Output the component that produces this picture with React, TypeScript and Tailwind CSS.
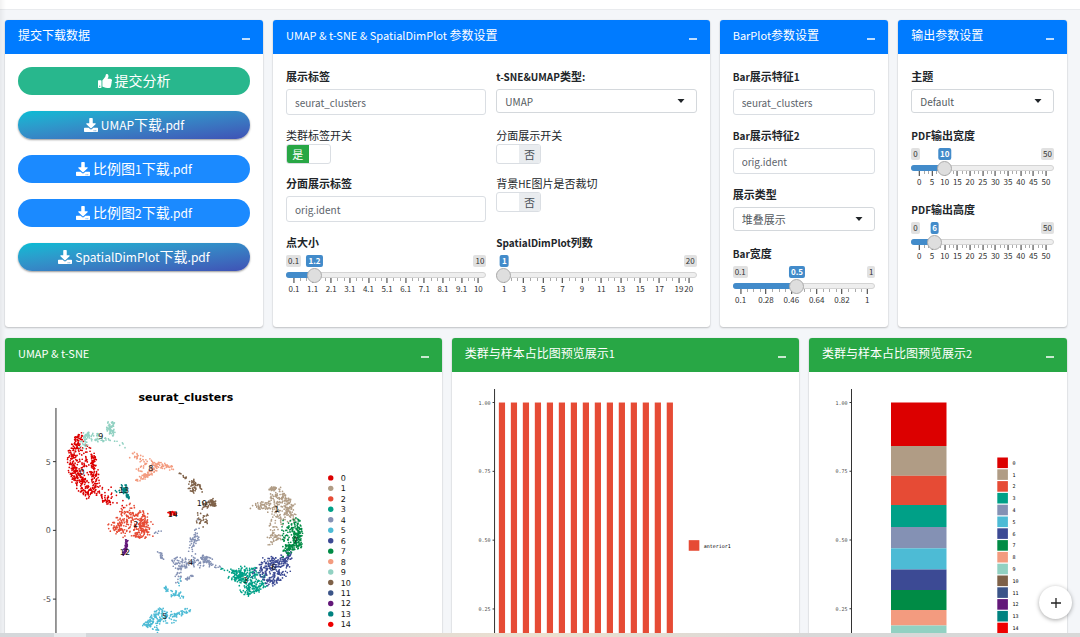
import { useState, useId } from 'react'
import type { ReactNode } from 'react'
import { FaDownload, FaThumbsUp } from 'react-icons/fa'

const CLUSTER_COLORS = [
  '#dc0000', '#b09c85', '#e64b35', '#00a087', '#8491b4', '#4dbbd5', '#3c4a94', '#008b45',
  '#f39b7f', '#91d1c2', '#7e6148', '#3b5488', '#631879', '#008280', '#ee0000',
]

// strip of points: cluster, x1, y1, x2, y2, width, count
type Strip = [number, number, number, number, number, number, number]

const STRIPS: Strip[] = [
  [0, 80, 437, 71, 456, 7, 70], [0, 72, 455, 75, 478, 8, 90], [0, 77, 474, 87, 494, 10, 90],
  [0, 83, 446, 86, 478, 11, 60], [0, 94, 455, 94, 468, 4, 45], [0, 93, 468, 97, 486, 7, 50],
  [0, 85, 490, 99, 492, 8, 40], [0, 99, 497, 112, 502, 7, 35], [0, 76, 442, 82, 435, 5, 18],
  [0, 106, 490, 128, 506, 8, 12],
  [9, 111, 422, 112, 434, 5, 55], [9, 84, 435, 98, 434, 4, 30], [9, 82, 445, 90, 438, 7, 30],
  [9, 96, 440, 110, 439, 3, 24], [9, 104, 429, 109, 431, 4, 8], [9, 112, 440, 124, 446, 4, 6],
  [8, 132, 455, 150, 462, 6, 30], [8, 150, 463, 172, 468, 5, 60], [8, 156, 468, 144, 478, 5, 65],
  [8, 137, 481, 143, 478, 4, 14], [8, 138, 472, 146, 466, 5, 12],
  [2, 112, 526, 122, 528, 8, 55], [2, 122, 526, 143, 524, 18, 120], [2, 140, 513, 145, 532, 7, 85],
  [2, 119, 514, 136, 517, 10, 30], [2, 135, 532, 149, 535, 8, 45], [2, 123, 510, 136, 507, 8, 12],
  [13, 124, 486, 125, 492, 4, 45], [13, 126, 493, 129, 499, 2, 14], [13, 115, 491, 121, 492, 3, 5],
  [12, 127, 540, 125, 552, 2, 40], [12, 123, 556, 127, 545, 2, 30],
  [14, 169, 514, 176, 513, 3, 24],
  [10, 191, 484, 194, 490, 7, 36], [10, 193, 482, 202, 491, 5, 16], [10, 178, 473, 187, 478, 2, 9],
  [10, 204, 504, 215, 504, 5, 36], [10, 212, 500, 214, 505, 4, 26], [10, 202, 509, 203, 524, 9, 32],
  [4, 199, 520, 194, 541, 4, 10], [4, 192, 542, 196, 538, 6, 24], [4, 193, 546, 192, 553, 7, 14],
  [4, 159, 552, 163, 558, 3, 16], [4, 173, 563, 192, 564, 9, 60], [4, 192, 563, 211, 562, 8, 45],
  [4, 203, 557, 210, 561, 4, 35], [4, 179, 567, 178, 583, 5, 24], [4, 186, 580, 192, 576, 2, 12],
  [4, 212, 565, 224, 569, 3, 7], [4, 150, 530, 160, 533, 5, 5],
  [5, 165, 588, 168, 591, 3, 16], [5, 173, 594, 182, 595, 6, 30], [5, 179, 580, 179, 585, 3, 4],
  [5, 146, 627, 152, 621, 5, 40], [5, 151, 624, 163, 612, 9, 70], [5, 158, 616, 172, 618, 10, 50],
  [5, 172, 617, 190, 610, 4, 45], [5, 156, 629, 158, 632, 3, 8],
  [3, 222, 569, 238, 571, 3, 14], [3, 232, 574, 244, 578, 9, 80], [3, 240, 570, 258, 572, 6, 40],
  [3, 244, 579, 262, 583, 13, 110], [3, 245, 592, 254, 591, 8, 45], [3, 254, 589, 265, 587, 6, 30],
  [6, 259, 575, 268, 562, 11, 50], [6, 266, 562, 286, 562, 10, 70], [6, 269, 571, 282, 571, 16, 100],
  [6, 270, 582, 276, 580, 7, 35], [6, 283, 561, 290, 556, 6, 25], [6, 288, 550, 292, 560, 4, 12],
  [1, 271, 489, 275, 489, 3, 30], [1, 278, 493, 287, 502, 9, 45], [1, 254, 507, 275, 504, 6, 55],
  [1, 275, 502, 290, 513, 18, 110], [1, 288, 504, 293, 519, 6, 40], [1, 278, 513, 276, 530, 10, 36],
  [1, 272, 537, 281, 537, 7, 32], [1, 270, 546, 273, 541, 3, 6],
  [7, 295, 519, 299, 538, 7, 60], [7, 298, 530, 298, 546, 7, 75], [7, 287, 524, 290, 545, 11, 60],
  [7, 286, 548, 301, 545, 5, 50], [7, 284, 553, 291, 550, 6, 25],
]

const CLUSTER_LABELS: [string, number, number][] = [
  ['0', 82, 475], ['1', 277, 512], ['2', 136, 527], ['3', 246, 583], ['4', 191, 565],
  ['5', 165, 619], ['6', 274, 570], ['7', 296, 543], ['8', 151, 471], ['9', 101, 439],
  ['10', 202, 506], ['12', 125, 555], ['13', 124, 493], ['14', 173, 517],
]

// small seeded generator, so the plot is the same on every render
function makeRandom(seed: number) {
  let s = seed
  return () => {
    s = (s * 1664525 + 1013904223) % 4294967296
    return s / 4294967296
  }
}

const random = makeRandom(7)

function stripPath([, x1, y1, x2, y2, width, count]: Strip) {
  let d = ''
  for (let i = 0; i < count; i++) {
    const t = random()
    const angle = random() * Math.PI * 2
    const r = Math.sqrt(random()) * width * 0.7
    const x = x1 + (x2 - x1) * t + Math.cos(angle) * r
    const y = y1 + (y2 - y1) * t + Math.sin(angle) * r
    d += `M${x.toFixed(1)} ${y.toFixed(1)}h0`
  }
  return d
}

const POINTS = STRIPS.map((s) => ({ color: CLUSTER_COLORS[s[0]], d: stripPath(s) }))

// Latin letters are set a little smaller than the Chinese around them
function Mixed({ text, latin }: { text: string; latin: string }) {
  return (
    <span>
      {text.split(/([\x20-\x7e]+)/).map((part, i) => (i % 2 ? <span key={i} className={`leading-none ${latin}`}>{part}</span> : part))}
    </span>
  )
}

interface CardProps {
  title: string
  className: string
  tone?: 'blue' | 'green'
  children: ReactNode
}

function Card({ title, className, tone = 'blue', children }: CardProps) {
  const [open, setOpen] = useState(true)
  return (
    <section className={`flex flex-col rounded-[3px] bg-white shadow-[0_0_1px_rgba(0,0,0,0.2),0_1px_2px_rgba(0,0,0,0.2)] ${className}`}>
      <header
        className={`flex h-[34px] items-center justify-between rounded-t-[3px] px-[13px] text-white ${
          tone === 'blue' ? 'bg-[#007bff]' : 'bg-[#28a745]'
        }`}
      >
        <h3 className="pb-1 text-[12px] leading-4 whitespace-nowrap">
          <Mixed text={title} latin="text-[11px]" />
        </h3>
        <button type="button" aria-label={title} onClick={() => setOpen(!open)} className="flex h-4 w-2 items-center pt-1">
          <span className="h-[2px] w-2 bg-white/75" />
        </button>
      </header>
      {open && children}
    </section>
  )
}

function Label({ htmlFor, text }: { htmlFor: string; text: string }) {
  return (
    <label htmlFor={htmlFor} className="mb-[5px] block text-[11px] leading-4 font-bold whitespace-nowrap text-[#212529]">
      <Mixed text={text} latin="text-[10px]" />
    </label>
  )
}

function TextField({ label, value }: { label: string; value: string }) {
  const id = useId()
  return (
    <div className="mb-3">
      <Label htmlFor={id} text={label} />
      <input
        id={id}
        type="text"
        defaultValue={value}
        className="block h-[26px] w-full rounded-[3px] border border-[#dadee3] bg-white px-2 text-[10px] text-[#5d646b] outline-none"
      />
    </div>
  )
}

function SelectField({ label, options, size = 'text-[10px]' }: { label: string; options: string[]; size?: string }) {
  const id = useId()
  return (
    <div className="mb-[14px]">
      <Label htmlFor={id} text={label} />
      <div className="relative">
        <select
          id={id}
          className={`block h-6 w-full appearance-none rounded-[3px] border border-[#d4d8dc] bg-white px-2 text-[#555b61] outline-none ${size}`}
        >
          {options.map((o) => (
            <option key={o}>{o}</option>
          ))}
        </select>
        <svg viewBox="0 0 8 4" className="pointer-events-none absolute top-[10px] right-3 h-1 w-2">
          <path d="M0.5 0h7L4 4z" fill="#212529" />
        </svg>
      </div>
    </div>
  )
}

function Toggle({ label, on }: { label: string; on?: boolean }) {
  const [checked, setChecked] = useState(!!on)
  return (
    <label className="mb-[11px] block w-max cursor-pointer text-[11px] leading-[17px] text-[#212529]">
      <Mixed text={label} latin="text-[10px]" />
      <input type="checkbox" className="sr-only" checked={checked} onChange={() => setChecked(!checked)} />
      <span className="flex h-5 w-[45px] overflow-hidden rounded-[3px] border border-[#dadee3] bg-white leading-[18px]">
        {checked ? (
          <span className="w-1/2 bg-[#28a745] text-center text-white">是</span>
        ) : (
          <span className="ml-auto w-1/2 bg-[#e9ecef] text-center text-[#495057]">否</span>
        )}
      </span>
    </label>
  )
}

interface SliderProps {
  label: string
  min: number
  max: number
  step: number
  value: number
  marks: number[]
  minor: number
}

function Slider({ label, min, max, step, value, marks, minor }: SliderProps) {
  const id = useId()
  const [current, setCurrent] = useState(value)
  const pct = (v: number) => ((v - min) / (max - min)) * 100
  const gap = marks[1] - marks[0]
  const ticks = marks
    .flatMap((m) => Array.from({ length: minor }, (_, i) => m + (gap * (i + 1)) / (minor + 1)))
    .filter((v) => v < max)

  return (
    <div>
      <Label htmlFor={id} text={label} />
      <div className="h-[41px] text-[8px] leading-3 text-[#333]">
        <div className="relative flex h-4 items-start justify-between">
          <span className={`rounded-[2px] bg-[#e1e1e1] px-[2px] ${pct(current) < 6 ? 'invisible' : ''}`}>{min}</span>
          <span className={`rounded-[2px] bg-[#e1e1e1] px-[2px] ${pct(current) > 94 ? 'invisible' : ''}`}>{max}</span>
          <div className="absolute inset-x-2 top-0">
            <span
              className="absolute -translate-x-1/2 rounded-[2px] bg-[#428bca] px-[2px] font-bold text-white"
              style={{ left: `${pct(current)}%` }}
            >
              {current}
            </span>
          </div>
        </div>
        <div className="relative h-[7px]">
          <div className="absolute inset-x-0 top-[1px] h-[6px] rounded-full border border-[#d4d4d4] bg-[#eee]" />
          <div
            className="absolute left-0 top-[1px] h-[6px] rounded-l-full bg-[#428bca]"
            style={{ width: `${pct(current)}%` }}
          />
          <input
            id={id}
            type="range"
            min={min}
            max={max}
            step={step}
            value={current}
            onChange={(e) => setCurrent(Number(e.target.value))}
            className="absolute inset-x-0 top-[-4px] z-10 m-0 h-4 w-full appearance-none bg-transparent outline-none [&::-webkit-slider-thumb]:size-[15px] [&::-webkit-slider-thumb]:appearance-none [&::-webkit-slider-thumb]:rounded-full [&::-webkit-slider-thumb]:border [&::-webkit-slider-thumb]:border-solid [&::-webkit-slider-thumb]:border-[#ababab] [&::-webkit-slider-thumb]:bg-[#dedede]"
          />
        </div>
        <div className="relative mx-2 h-4">
          {ticks.map((v) => (
            <span key={v} className="absolute top-0 h-[3px] w-px bg-[#aaa]" style={{ left: `${pct(v)}%` }} />
          ))}
          {marks.map((m) => (
            <span key={m} className="absolute top-0 flex -translate-x-1/2 flex-col items-center" style={{ left: `${pct(m)}%` }}>
              <span className="h-[5px] w-px bg-[#333]" />
              <span>{m}</span>
            </span>
          ))}
        </div>
      </div>
    </div>
  )
}

function UmapPlot() {
  return (
    <svg viewBox="5 372 437 360" className="w-full" fontFamily="DejaVu Sans, sans-serif">
      <text x="186" y="401" fontSize="11" fontWeight="bold" textAnchor="middle">seurat_clusters</text>
      <path d="M56 408V680H315" stroke="#333" fill="none" />
      {[5, 0, -5].map((v) => (
        <g key={v}>
          <path d={`M53 ${530.5 - v * 13.76}h3`} stroke="#333" />
          <text x="51" y={533.5 - v * 13.76} fontSize="8" textAnchor="end" fill="#4d4d4d">{v}</text>
        </g>
      ))}
      {POINTS.map((p, i) => (
        <path key={i} d={p.d} stroke={p.color} strokeWidth="1.7" strokeLinecap="round" fill="none" />
      ))}
      {CLUSTER_LABELS.map(([name, x, y]) => (
        <text key={name} x={x} y={y} fontSize="8" textAnchor="middle" fill="#111">{name}</text>
      ))}
      {CLUSTER_COLORS.map((c, i) => (
        <g key={i}>
          <circle cx="331" cy={478 + i * 10.47} r="2.7" fill={c} />
          <text x="341" y={481 + i * 10.47} fontSize="8" fill="#111">{i}</text>
        </g>
      ))}
    </svg>
  )
}

const Y_TICKS = ['1.00', '0.75', '0.50', '0.25']

function YAxis({ x }: { x: number }) {
  return (
    <g>
      <path d={`M${x} 17V312`} stroke="#333" />
      {Y_TICKS.map((t, i) => (
        <g key={t}>
          <path d={`M${x - 2} ${30.5 + i * 68.75}h2`} stroke="#333" />
          <text x={x - 4} y={32.5 + i * 68.75} fontSize="5" textAnchor="end" fill="#4d4d4d">{t}</text>
        </g>
      ))}
    </g>
  )
}

function SampleBars() {
  return (
    <svg viewBox="0 0 347 360" className="w-full" fontFamily="DejaVu Sans Mono, monospace">
      <YAxis x={42.5} />
      {CLUSTER_COLORS.map((_, i) => (
        <rect key={i} x={46.8 + i * 11.98} y="30.5" width="6.2" height="275" fill="#e64b35" />
      ))}
      <rect x="236.5" y="168" width="10.6" height="10.6" fill="#e64b35" />
      <text x="251.5" y="175.5" fontSize="5" fill="#000">anterior1</text>
    </svg>
  )
}

// top edge of each cluster's share in the stack
const STACK = [30.5, 74, 103.8, 133, 155, 176.3, 197.5, 218, 238, 253.5, 268, 279, 288, 295, 301, 305.5]

function ClusterStack() {
  return (
    <svg viewBox="0 0 258 360" className="w-full" fontFamily="DejaVu Sans Mono, monospace">
      <YAxis x={42.5} />
      {CLUSTER_COLORS.map((c, i) => (
        <g key={i}>
          <rect x="82" y={STACK[i]} width="55.5" height={STACK[i + 1] - STACK[i]} fill={c} />
          <rect x="188.3" y={85.5 + i * 11.8} width="10.6" height="10.6" fill={c} />
          <text x="203.5" y={92.8 + i * 11.8} fontSize="5" fill="#000">{i}</text>
        </g>
      ))}
    </svg>
  )
}

const DOWNLOADS = [
  { name: 'UMAP下载.pdf', shaded: true },
  { name: '比例图1下载.pdf', shaded: false },
  { name: '比例图2下载.pdf', shaded: false },
  { name: 'SpatialDimPlot下载.pdf', shaded: true },
]

const BUTTON = 'flex h-7 items-center justify-center gap-[3px] rounded-full pb-px text-[14px] text-white'
const SHADED = 'bg-linear-to-br from-[#00bcd4] to-[#3f51b5] shadow-[0_1px_2px_rgba(0,0,0,0.4)]'

export default function App() {
  return (
    <div className="relative flex h-screen flex-col overflow-hidden bg-[#f4f6f9] font-['Noto_Sans_CJK_SC',sans-serif]">
      <div className="h-[10px] shrink-0 border-b border-[#e9ebee] bg-white" />

      <main className="grid grid-cols-12 gap-x-[10px] gap-y-[11px] pt-[10px] pr-[13px] pl-[5px]">
        <Card title="提交下载数据" className="col-span-3">
          <div className="flex flex-col gap-4 px-[13px] pt-[13px] pb-5">
            <button type="button" className={`${BUTTON} bg-[#28b78d]`}>
              <FaThumbsUp className="size-[14px]" />
              提交分析
            </button>
            {DOWNLOADS.map((d) => (
              <button key={d.name} type="button" className={`${BUTTON} ${d.shaded ? SHADED : 'bg-[#1b8aff]'}`}>
                <FaDownload className="size-[14px]" />
                <Mixed text={d.name} latin="text-[12px]" />
              </button>
            ))}
          </div>
        </Card>

        <Card title="UMAP & t-SNE & SpatialDimPlot 参数设置" className="col-span-5">
          <div className="grid grid-cols-2 gap-x-[10px] px-[13px] pt-[14px] pb-5">
            <div>
              <TextField label="展示标签" value="seurat_clusters" />
              <Toggle label="类群标签开关" on />
              <TextField label="分面展示标签" value="orig.ident" />
              <Slider label="点大小" min={0.1} max={10} step={0.1} value={1.2} marks={[0.1, 1.1, 2.1, 3.1, 4.1, 5.1, 6.1, 7.1, 8.1, 9.1, 10]} minor={2} />
            </div>
            <div className="flex flex-col">
              <SelectField label="t-SNE&UMAP类型:" options={['UMAP', 't-SNE']} />
              <Toggle label="分面展示开关" />
              <Toggle label="背景HE图片是否裁切" />
              <div className="mt-auto">
                <Slider label="SpatialDimPlot列数" min={1} max={20} step={1} value={1} marks={[1, 3, 5, 7, 9, 11, 13, 15, 17, 19, 20]} minor={2} />
              </div>
            </div>
          </div>
        </Card>

        <Card title="BarPlot参数设置" className="col-span-2">
          <div className="px-[13px] pt-[14px] pb-5">
            <TextField label="Bar展示特征1" value="seurat_clusters" />
            <TextField label="Bar展示特征2" value="orig.ident" />
            <SelectField label="展示类型" options={['堆叠展示']} size="text-[11px]" />
            <Slider label="Bar宽度" min={0.1} max={1} step={0.1} value={0.5} marks={[0.1, 0.28, 0.46, 0.64, 0.82, 1]} minor={3} />
          </div>
        </Card>

        <Card title="输出参数设置" className="col-span-2">
          <div className="flex flex-col px-[13px] pt-[14px] pb-5">
            <SelectField label="主题" options={['Default']} />
            <div className="flex flex-col gap-3">
              <Slider label="PDF输出宽度" min={0} max={50} step={1} value={10} marks={[0, 5, 10, 15, 20, 25, 30, 35, 40, 45, 50]} minor={2} />
              <Slider label="PDF输出高度" min={0} max={50} step={1} value={6} marks={[0, 5, 10, 15, 20, 25, 30, 35, 40, 45, 50]} minor={2} />
            </div>
          </div>
        </Card>

        <Card title="UMAP & t-SNE" tone="green" className="col-span-5">
          <UmapPlot />
        </Card>
        <Card title="类群与样本占比图预览展示1" tone="green" className="col-span-4">
          <SampleBars />
        </Card>
        <Card title="类群与样本占比图预览展示2" tone="green" className="col-span-3">
          <ClusterStack />
        </Card>
      </main>

      <button
        type="button"
        aria-label="+"
        className="fixed right-2 bottom-[18px] flex size-[33px] items-center justify-center rounded-full bg-white shadow-[0_1px_4px_rgba(0,0,0,0.35)]"
      >
        <svg viewBox="0 0 10 10" className="size-[10px]">
          <path d="M5 0v10M0 5h10" stroke="#222" strokeWidth="1.3" />
        </svg>
      </button>

      <div className="pointer-events-none fixed inset-y-0 left-0 w-[6px] bg-linear-to-r from-black/5 to-transparent" />
      <div className="fixed inset-x-0 bottom-0 flex h-1 bg-linear-to-r from-[#d5d8db] from-20% via-[#ecdfcf] to-[#d8d8d8] to-75%">
        <div className="ml-[5%] w-[3%] bg-[#e8eaec]" />
      </div>
    </div>
  )
}
